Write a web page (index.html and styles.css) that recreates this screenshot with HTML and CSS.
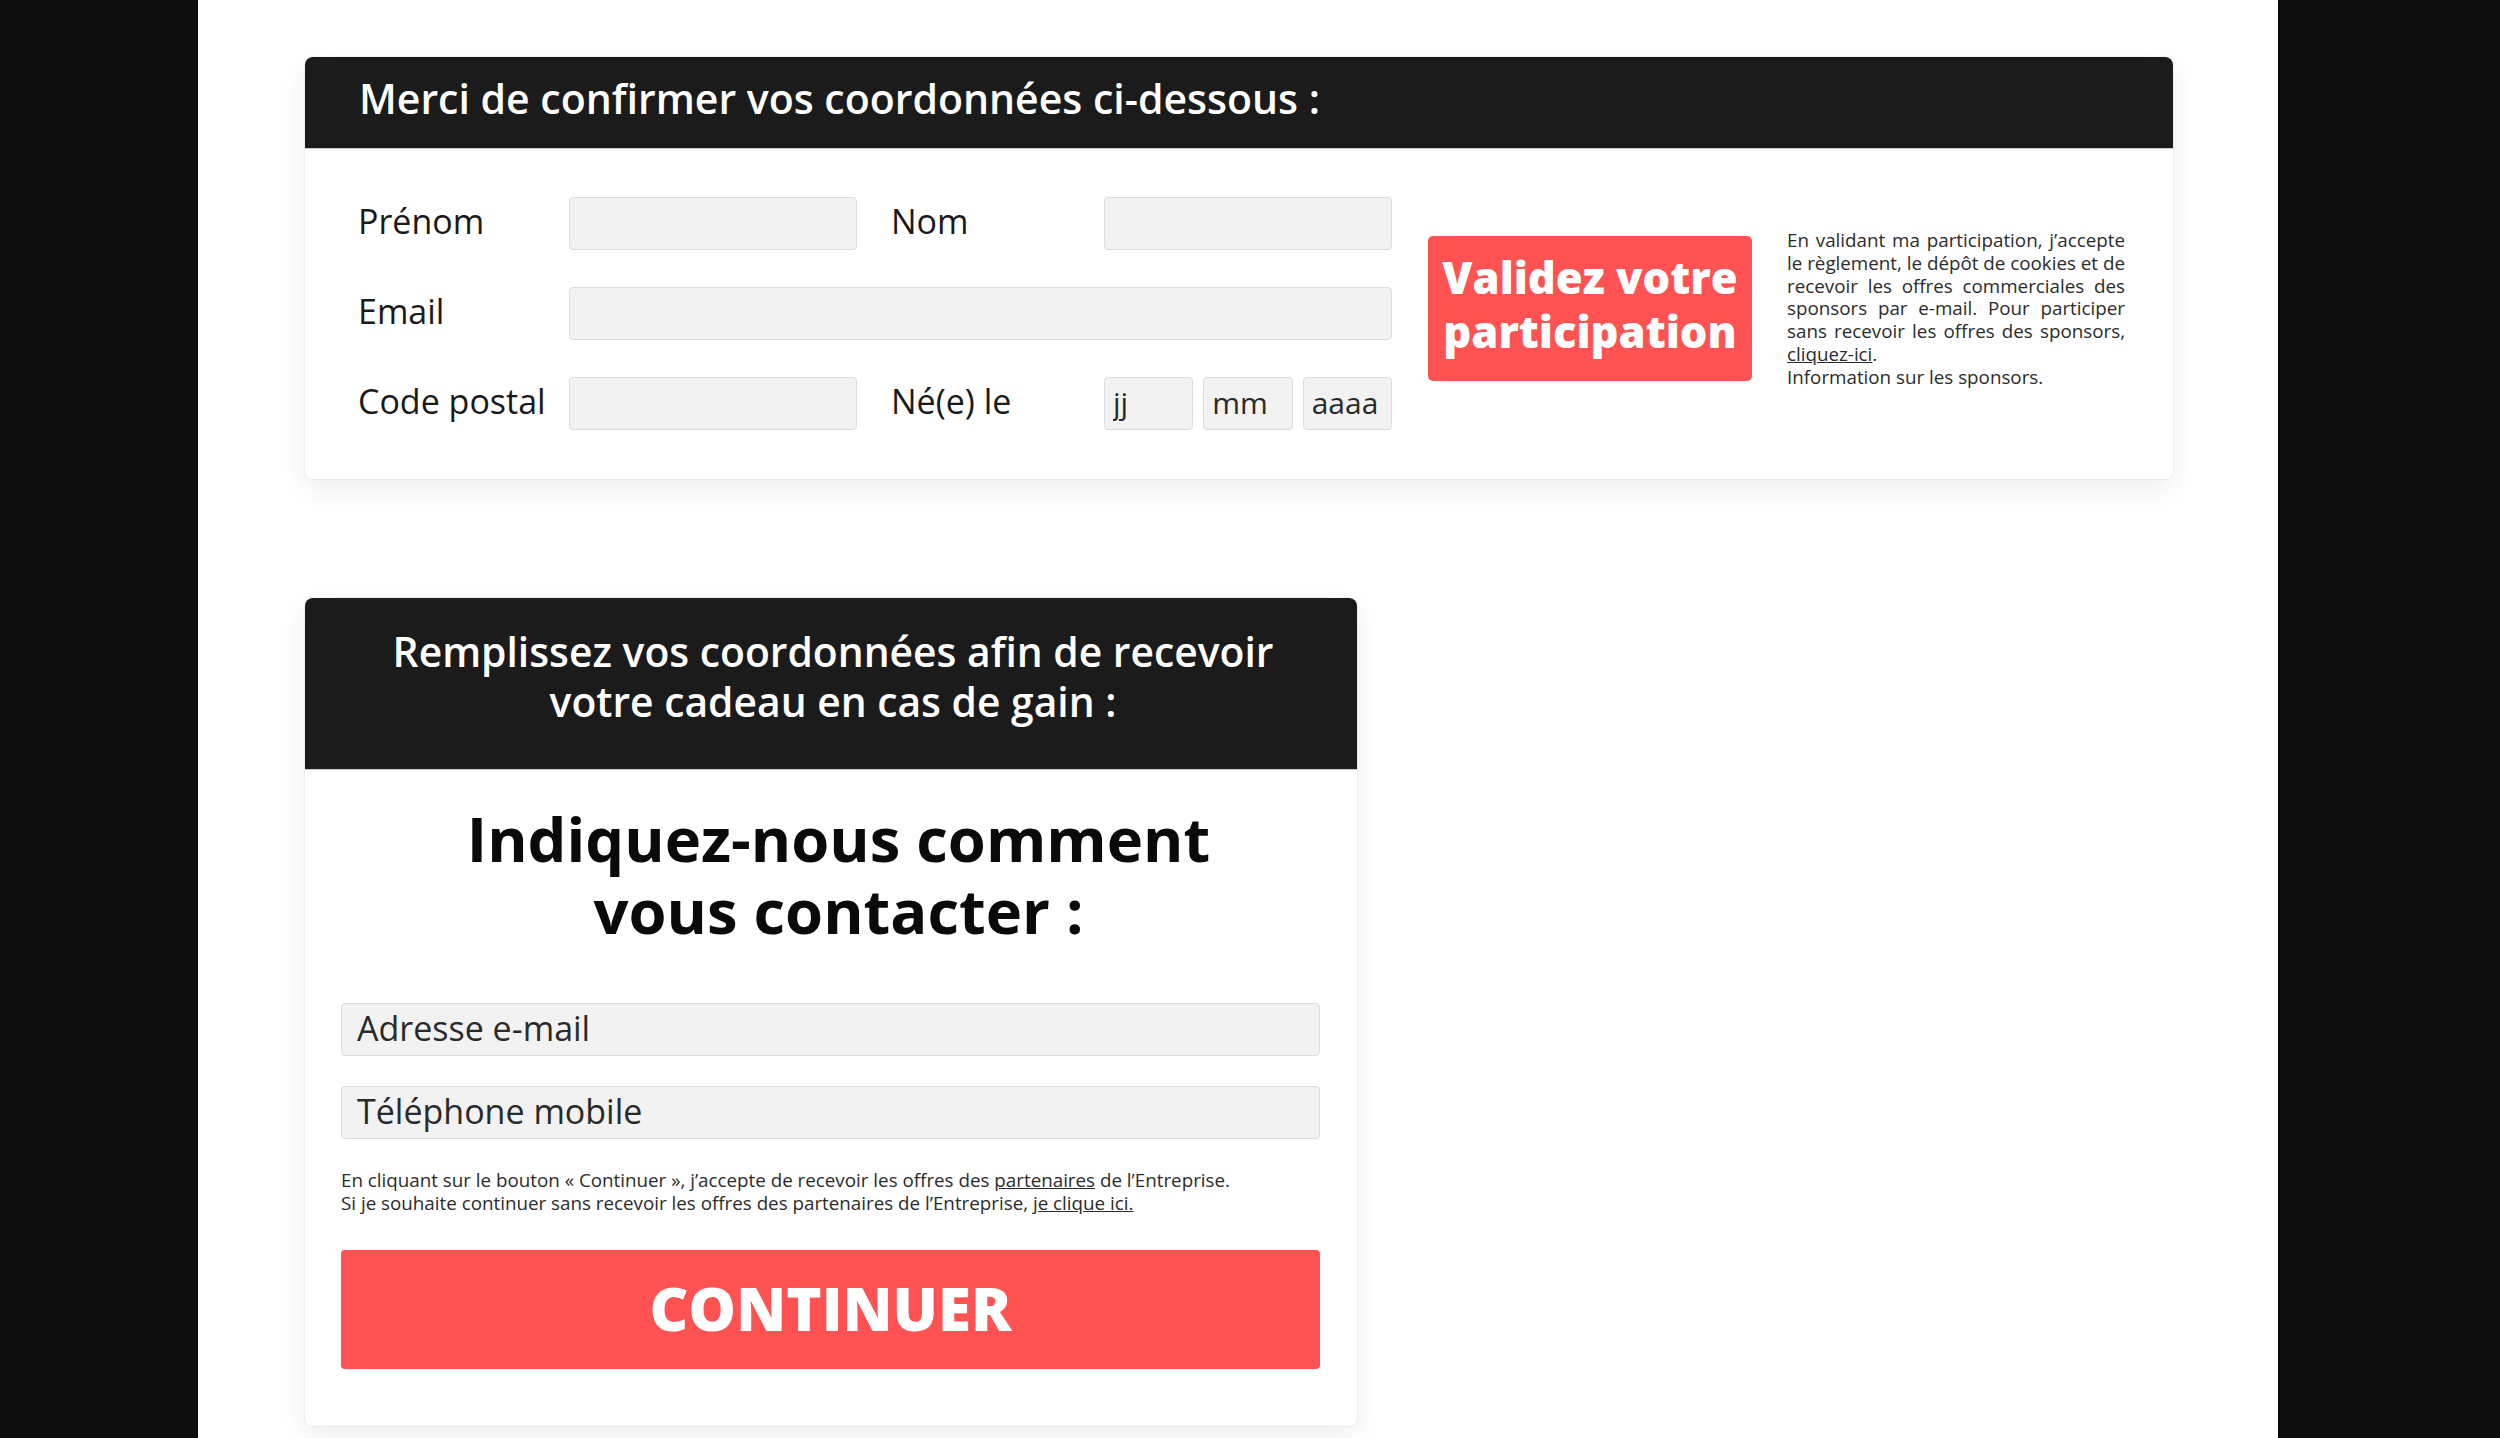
FILE: index.html
```html
<!DOCTYPE html>
<html lang="fr">
<head>
<meta charset="utf-8">
<title>Confirmation</title>
<link rel="stylesheet" href="styles.css">
</head>
<body>
<div class="page">
  <section class="card card-confirm">
    <div class="card-head head-confirm">
      <h2>Merci de confirmer vos coordonnées ci-dessous :</h2>
    </div>
    <div class="confirm-body">
      <div class="fields">
        <label class="lbl">Prénom</label>
        <input class="inp" type="text">
        <label class="lbl lbl-second">Nom</label>
        <input class="inp" type="text">
        <label class="lbl">Email</label>
        <input class="inp inp-wide" type="text">
        <label class="lbl">Code postal</label>
        <input class="inp" type="text">
        <label class="lbl lbl-second">Né(e) le</label>
        <div class="date">
          <input class="inp inp-date" type="text" placeholder="jj">
          <input class="inp inp-date" type="text" placeholder="mm">
          <input class="inp inp-date" type="text" placeholder="aaaa">
        </div>
      </div>
      <button class="validate" type="button">Validez votre<br>participation</button>
      <div class="legal">
        <span class="jline">En validant ma participation, j’accepte</span>
        <span class="jline">le règlement, le dépôt de cookies et de</span>
        <span class="jline">recevoir les offres commerciales des</span>
        <span class="jline">sponsors par e-mail. Pour participer</span>
        <span class="jline">sans recevoir les offres des sponsors,</span>
        <span class="line"><a href="#">cliquez-ici</a>.</span>
        <span class="line">Information sur les sponsors.</span>
      </div>
    </div>
  </section>

  <section class="card card-contact">
    <div class="card-head head-contact">
      <h2>Remplissez vos coordonnées afin de recevoir<br>votre cadeau en cas de gain :</h2>
    </div>
    <div class="contact-body">
      <h3>Indiquez-nous comment<br>vous contacter :</h3>
      <input class="inp inp-big" type="text" placeholder="Adresse e-mail">
      <input class="inp inp-big" type="text" placeholder="Téléphone mobile">
      <p class="notice">En cliquant sur le bouton « Continuer », j’accepte de recevoir les offres des <a href="#">partenaires</a> de l’Entreprise.<br>Si je souhaite continuer sans recevoir les offres des partenaires de l’Entreprise, <a href="#">je clique ici.</a></p>
      <button class="continue" type="button">CONTINUER</button>
    </div>
  </section>
</div>
</body>
</html>
```

FILE: styles.css
```css
html, body {
  margin: 0;
  padding: 0;
}

body {
  background: #0d0d0d;
  font-family: "Open Sans", "Noto Sans", sans-serif;
  color: #1a1a1a;
}

.page {
  box-sizing: border-box;
  margin-left: 198px;
  width: 2080px;
  min-height: 100vh;
  background: #ffffff;
  padding: 57px 0 40px 107px;
}

.card {
  background: #ffffff;
  border-radius: 8px;
  box-shadow: 0 10px 28px rgba(0, 0, 0, 0.07), 0 0 0 1px rgba(0, 0, 0, 0.035);
  overflow: hidden;
}

.card-head {
  background: #1b1b1b;
  color: #ffffff;
  border-bottom: 1px solid #c9c9c9;
}

.card-head h2 {
  margin: 0;
  font-weight: 600;
}

/* ---------- Card 1 ---------- */

.card-confirm {
  width: 1868px;
}

.head-confirm {
  box-sizing: border-box;
  height: 92px;
  padding: 16px 54px 0;
}

.head-confirm h2 {
  font-size: 41px;
  line-height: 50px;
}

.confirm-body {
  display: flex;
  align-items: flex-start;
  padding: 48px 48px 49px 53px;
}

.fields {
  display: grid;
  grid-template-columns: 211px 288px 247px 288px;
  grid-auto-rows: 53px;
  row-gap: 37px;
  align-items: center;
}

.lbl {
  font-size: 34px;
  line-height: 44px;
  margin-bottom: 6px;
  color: #1a1a1a;
}

.lbl-second {
  padding-left: 34px;
}

.inp {
  box-sizing: border-box;
  height: 53px;
  width: 100%;
  margin: 0;
  border: 1px solid #d6dde4;
  border-radius: 4px;
  background: #f2f2f2;
  font-family: "Open Sans", "Noto Sans", sans-serif;
  color: #222;
  outline: none;
}

.inp::placeholder {
  color: #2a2a2a;
  opacity: 1;
}

.inp-wide {
  grid-column: 2 / 5;
}

.date {
  display: flex;
  gap: 10px;
  height: 53px;
}

.inp-date {
  flex: 1;
  min-width: 0;
  padding: 0 0 2px 8px;
  font-size: 30px;
}

.validate {
  box-sizing: border-box;
  flex: none;
  width: 324px;
  height: 145px;
  margin: 39px 0 0 36px;
  padding: 0 0 8px;
  border: none;
  border-radius: 5px;
  background: #ff5353;
  color: #ffffff;
  font-family: "Open Sans", "Noto Sans", sans-serif;
  font-size: 43.5px;
  font-weight: 800;
  line-height: 54px;
  cursor: pointer;
}

.legal {
  flex: none;
  width: 338px;
  margin: 32px 0 0 35px;
  font-size: 18.8px;
  line-height: 22.8px;
  color: #2b2b2b;
}

.legal .jline,
.legal .line {
  display: block;
  white-space: nowrap;
}

.legal .jline {
  text-align: justify;
  text-align-last: justify;
}

.legal a,
.notice a {
  color: inherit;
  text-decoration: underline;
}

/* ---------- Card 2 ---------- */

.card-contact {
  width: 1052px;
  margin-top: 119px;
}

.head-contact {
  padding: 28px 40px 43px 44px;
  text-align: center;
}

.head-contact h2 {
  font-size: 40.8px;
  line-height: 50px;
}

.contact-body {
  display: flex;
  flex-direction: column;
  padding: 32px 37px 57px 36px;
}

.contact-body h3 {
  margin: 0 0 57px;
  padding-left: 16px;
  font-size: 61.5px;
  font-weight: 700;
  line-height: 72px;
  text-align: center;
  color: #0a0a0a;
}

.inp-big {
  padding: 0 0 3px 15px;
  font-size: 34px;
}

.inp-big + .inp-big {
  margin-top: 30px;
}

.notice {
  margin: 30px 0 0;
  font-size: 18.8px;
  line-height: 23px;
  color: #2b2b2b;
}

.continue {
  box-sizing: border-box;
  height: 119px;
  width: 100%;
  margin-top: 35px;
  padding: 0 0 4px;
  border: none;
  border-radius: 4px;
  background: #ff5353;
  color: #ffffff;
  font-family: "Open Sans", "Noto Sans", sans-serif;
  font-size: 60px;
  font-weight: 800;
  line-height: 1;
  cursor: pointer;
}
```
